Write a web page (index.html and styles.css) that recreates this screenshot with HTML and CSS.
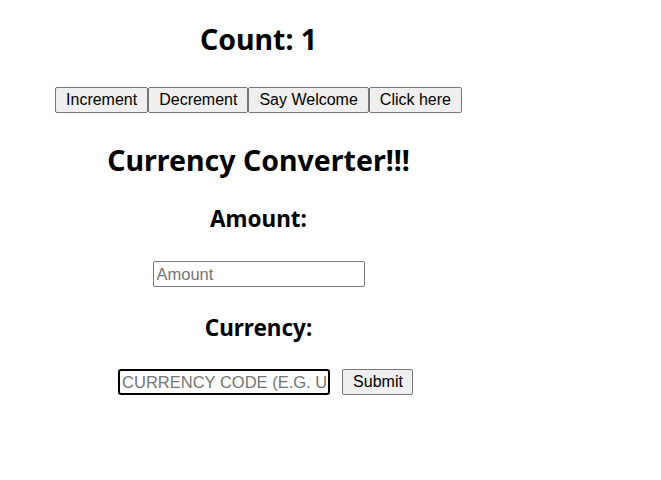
FILE: index.html
```html
<!DOCTYPE html>
<html>
<head>
<meta charset="utf-8">
<link rel="stylesheet" href="styles.css">
</head>
<body>
<div class="app">
  <h1 class="count">Count: 1</h1>
  <div class="buttons"><button class="btn">Increment</button><button class="btn">Decrement</button><button class="btn">Say Welcome</button><button class="btn">Click here</button></div>
  <h1 class="title">Currency Converter!!!</h1>
  <h2 class="label">Amount:</h2>
  <div class="row amount-row"><input class="field" type="text" placeholder="Amount"></div>
  <h2 class="label currency-label">Currency:</h2>
  <div class="row currency-row"><input class="field focused" type="text" placeholder="CURRENCY CODE (E.G. USD)" autofocus><button class="btn submit">Submit</button></div>
</div>
</body>
</html>
```
FILE: styles.css
```css
html, body {
  margin: 0;
  padding: 0;
  background: #ffffff;
}
.app {
  width: 517px;
  text-align: center;
  font-family: "Noto Sans", "Open Sans", sans-serif;
  color: #000;
}
.count {
  font-size: 28.5px;
  font-weight: 700;
  line-height: 36px;
  margin: 21px 0 0;
}
.buttons {
  margin-top: 30px;
  display: flex;
  justify-content: center;
}
.btn {
  font-family: "Liberation Sans", Arial, sans-serif;
  font-size: 16px;
  line-height: 18px;
  padding: 3px 10px;
  border: 1px solid #767676;
  border-radius: 2px;
  background: #efefef;
  color: #000;
  margin: 0;
}
.title {
  font-size: 28.5px;
  font-weight: 700;
  line-height: 36px;
  margin: 29px 0 0;
}
.label {
  font-size: 22.5px;
  font-weight: 700;
  line-height: 28px;
  margin: 27px 0 0;
}
.row {
  display: flex;
  justify-content: center;
}
.amount-row {
  margin-top: 28px;
}
.currency-label {
  margin-top: 27px;
}
.currency-row {
  margin-top: 27px;
  padding-left: 14px;
}
.field {
  box-sizing: border-box;
  width: 212px;
  height: 26px;
  font-family: "Liberation Sans", Arial, sans-serif;
  font-size: 16.5px;
  padding: 1px 3px;
  border: 1px solid #767676;
  border-radius: 2px;
  margin: 0;
  background: #fff;
}
.field::placeholder {
  color: #757575;
}
.field:focus {
  outline: none;
}
.focused {
  border: 2px solid #000;
  border-radius: 3px;
  padding: 0 2px;
}
.submit {
  margin-left: 12px;
  padding: 3px 9px 3px 10px;
}
```
